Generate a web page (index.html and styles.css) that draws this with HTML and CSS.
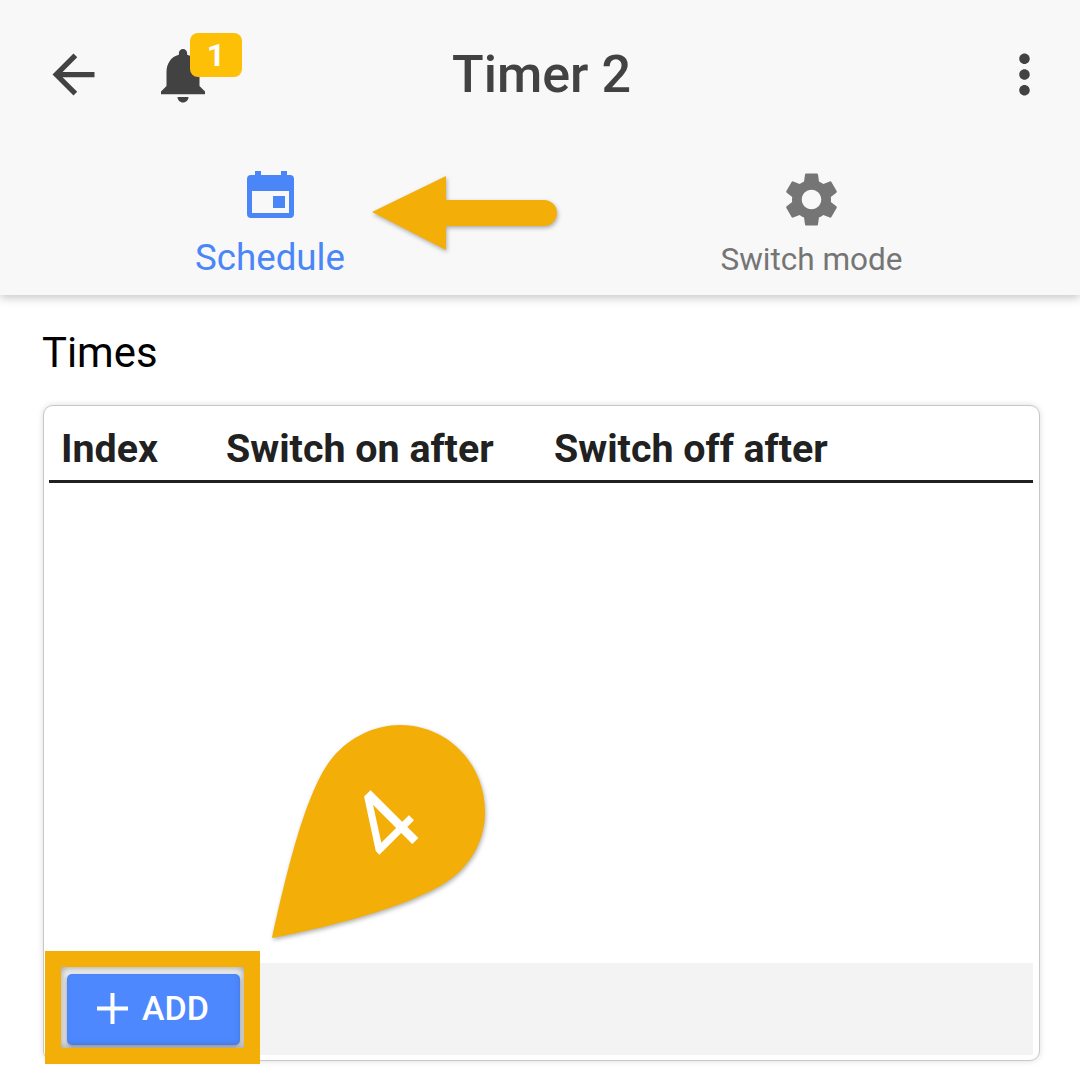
FILE: index.html
```html
<!DOCTYPE html>
<html lang="en">
<head>
  <meta charset="UTF-8" />
  <title>Timer 2</title>
  <link rel="stylesheet" href="styles.css">
</head>
<body>
  <div class="page">
    <header class="app-header">
      <div class="toolbar">
        <svg class="icon-back" viewBox="0 0 24 24"><path d="M20 11H7.83l5.59-5.59L12 4l-8 8 8 8 1.41-1.41L7.83 13H20v-2z"/></svg>
        <div class="bell">
          <svg class="icon-bell" viewBox="0 0 24 24"><path d="M12 22c1.1 0 2-.9 2-2h-4c0 1.1.89 2 2 2zm6-6v-5c0-3.07-1.64-5.64-4.5-6.32V4c0-.83-.67-1.5-1.5-1.5s-1.5.67-1.5 1.5v.68C7.63 5.36 6 7.92 6 11v5l-2 2v1h16v-1l-2-2z"/></svg>
          <span class="badge">1</span>
        </div>
        <h1 class="title">Timer 2</h1>
        <svg class="icon-more" viewBox="0 0 24 24"><path d="M12 8c1.1 0 2-.9 2-2s-.9-2-2-2-2 .9-2 2 .9 2 2 2zm0 2c-1.1 0-2 .9-2 2s.9 2 2 2 2-.9 2-2-.9-2-2-2zm0 6c-1.1 0-2 .9-2 2s.9 2 2 2 2-.9 2-2-.9-2-2-2z"/></svg>
      </div>
      <nav class="tabs">
        <div class="tab tab-active">
          <svg class="icon-event" viewBox="0 0 47 47">
            <path fill-rule="evenodd" d="M8 0h6v4h20V0h6v4h3a4 4 0 0 1 4 4v35a4 4 0 0 1-4 4H4a4 4 0 0 1-4-4V8a4 4 0 0 1 4-4h4V0zM5 20v22h37V20H5z"/>
            <rect x="26" y="25" width="12" height="12"/>
          </svg>
          <span>Schedule</span>
        </div>
        <div class="tab tab-mode">
          <svg class="icon-gear" viewBox="0 0 24 24"><path d="M19.14 12.94c.04-.3.06-.61.06-.94 0-.32-.02-.64-.07-.94l2.03-1.58c.18-.14.23-.41.12-.61l-1.92-3.32c-.12-.22-.37-.29-.59-.22l-2.39.96c-.5-.38-1.03-.7-1.62-.94l-.36-2.54c-.04-.24-.24-.41-.48-.41h-3.84c-.24 0-.43.17-.47.41l-.36 2.54c-.59.24-1.13.57-1.62.94l-2.39-.96c-.22-.08-.47 0-.59.22L2.74 8.87c-.12.21-.08.47.12.61l2.03 1.58c-.05.3-.09.63-.09.94s.02.64.07.94l-2.03 1.58c-.18.14-.23.41-.12.61l1.92 3.32c.12.22.37.29.59.22l2.39-.96c.5.38 1.03.7 1.62.94l.36 2.54c.05.24.24.41.48.41h3.84c.24 0 .44-.17.47-.41l.36-2.54c.59-.24 1.13-.56 1.62-.94l2.39.96c.22.08.47 0 .59-.22l1.92-3.32c.12-.22.07-.47-.12-.61l-2.01-1.58zM12 15.6c-1.98 0-3.6-1.62-3.6-3.6s1.62-3.6 3.6-3.6 3.6 1.62 3.6 3.6-1.62 3.6-3.6 3.6z"/></svg>
          <span>Switch mode</span>
        </div>
      </nav>
    </header>

    <main class="content">
      <h2 class="section-title">Times</h2>
      <section class="card">
        <div class="table-head">
          <span>Index</span>
          <span>Switch on after</span>
          <span>Switch off after</span>
        </div>
        <div class="table-body"></div>
        <div class="table-foot">
          <button class="add-btn" type="button">
            <svg class="icon-plus" viewBox="0 0 31 31"><path d="M13.5 0h4v13.5H31v4H17.5V31h-4V17.5H0v-4h13.5z"/></svg>
            ADD
          </button>
        </div>
      </section>
    </main>

    <!-- tutorial annotations drawn over the app -->
    <svg class="callouts" viewBox="0 0 1080 1077">
      <path d="M372 212 446 176V200H544a13 13 0 0 1 0 26H446V250Z"/>
      <path d="M272 938C285 880 305 790 333 757C350 737 375 725 400 725C447 725 485 763 485 812C485 838 473 862 452 878C420 903 340 925 272 938Z"/>
    </svg>
    <span class="callout-num">4</span>
    <div class="highlight"></div>
  </div>
</body>
</html>
```

FILE: styles.css
```css
html, body {
  margin: 0;
  padding: 0;
  background-color: #ffffff;
  font-family: 'Roboto', sans-serif;
}

.page {
  position: relative;
  width: 1080px;
  height: 1077px;
  overflow: hidden;
  display: flex;
  flex-direction: column;
}

.app-header {
  height: 295px;
  flex-shrink: 0;
  background-color: #f8f8f8;
  box-shadow: 0 3px 9px rgba(0, 0, 0, 0.22);
  position: relative;
  z-index: 1;
}

.toolbar {
  height: 149px;
  position: relative;
  display: flex;
  align-items: center;
  padding: 0 24px 0 42px;
  box-sizing: border-box;
}

.icon-back {
  width: 63px;
  height: 63px;
  fill: #424242;
}

.bell {
  position: relative;
  width: 66px;
  height: 66px;
  margin-left: 45px;
}

.icon-bell {
  width: 66px;
  height: 66px;
  fill: #424242;
}

.badge {
  position: absolute;
  left: 40px;
  top: -9px;
  width: 52px;
  height: 44px;
  border-radius: 8px;
  background-color: #fdc006;
  color: #ffffff;
  font-size: 32px;
  font-weight: 700;
  line-height: 44px;
  text-align: center;
}

.title {
  flex: 1;
  margin: 0;
  padding-right: 126px;
  text-align: center;
  color: #424242;
  font-size: 52px;
  font-weight: 500;
}

.icon-more {
  width: 63px;
  height: 63px;
  fill: #424242;
}

.tabs {
  display: grid;
  grid-template-columns: 1fr 1fr;
}

.tab {
  display: flex;
  flex-direction: column;
  align-items: center;
  color: #757575;
  font-size: 31.5px;
  line-height: 38px;
}

.tab-mode {
  padding-left: 3px;
}

.icon-gear {
  width: 65px;
  height: 65px;
  margin-top: 18px;
  margin-bottom: 9px;
  fill: #757575;
}

.tab-active {
  color: #4a86f7;
  font-size: 36.7px;
  line-height: 42px;
}

.icon-event {
  width: 47px;
  height: 47px;
  margin-top: 22px;
  margin-bottom: 19px;
  fill: #4a86f7;
}

.content {
  flex: 1;
  display: flex;
  flex-direction: column;
  padding: 34px 40px 16px 43px;
  min-height: 0;
}

.section-title {
  margin: 0 0 28px -1px;
  color: #000000;
  font-size: 41.8px;
  font-weight: 450;
  line-height: 48px;
}

.card {
  flex: 1;
  display: flex;
  flex-direction: column;
  background-color: #ffffff;
  border: 1px solid #c8c8c8;
  border-radius: 10px;
  box-shadow: 0 0 6px rgba(0, 0, 0, 0.14);
  padding: 0 6px 5px 5px;
}

.table-head {
  display: grid;
  grid-template-columns: 165px 328px 1fr;
  align-items: center;
  height: 63px;
  padding: 11px 0 0 12px;
  border-bottom: 3px solid #212121;
  color: #212121;
  font-size: 39.4px;
  font-weight: 700;
}

.table-body {
  flex: 1;
}

.table-foot {
  height: 92px;
  margin-left: -4px;
  padding: 11px 0 0 22px;
  box-sizing: border-box;
  background-color: #f3f3f3;
}

.add-btn {
  width: 173px;
  height: 71px;
  display: flex;
  align-items: center;
  gap: 14px;
  padding: 0 0 3px 30px;
  border: none;
  border-radius: 5px;
  background-color: #4d88ff;
  box-shadow: 0 2px 4px rgba(0, 0, 0, 0.35);
  color: #ffffff;
  font-family: 'Roboto', sans-serif;
  font-size: 34px;
  font-weight: 500;
}

.icon-plus {
  width: 31px;
  height: 31px;
  fill: #ffffff;
}

.callouts {
  position: absolute;
  left: 0;
  top: 0;
  width: 1080px;
  height: 1077px;
  z-index: 2;
  fill: #f3ae08;
  filter: drop-shadow(1px 2px 2px rgba(0, 0, 0, 0.3));
}

.callout-num {
  position: absolute;
  left: 355px;
  top: 771px;
  width: 60px;
  z-index: 3;
  color: #ffffff;
  font-size: 95px;
  font-weight: 400;
  line-height: 110px;
  text-align: center;
  transform: rotate(-45deg);
}

.highlight {
  position: absolute;
  left: 45px;
  top: 951px;
  width: 215px;
  height: 113px;
  box-sizing: border-box;
  z-index: 2;
  border: 16px solid #f3ae08;
  box-shadow: inset 0 0 9px rgba(0, 0, 0, 0.4);
}
```
